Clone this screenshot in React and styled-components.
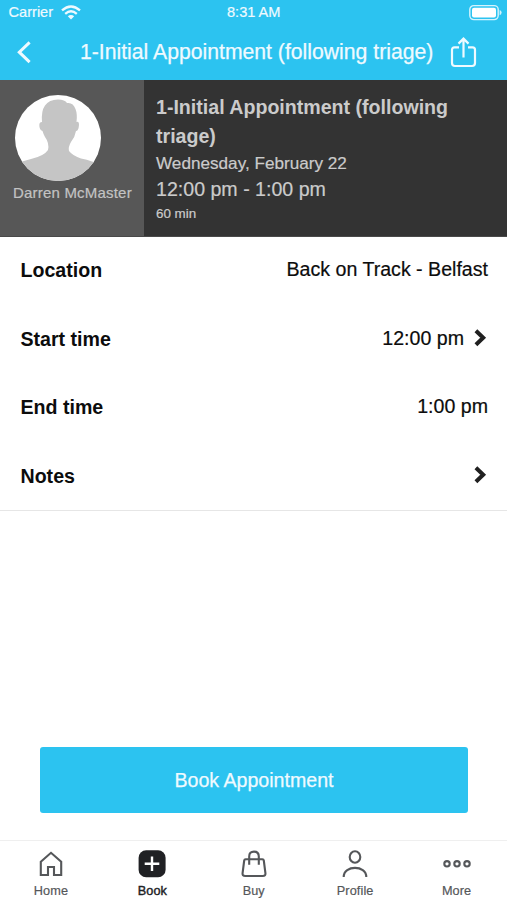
import React from 'react';
import styled, { createGlobalStyle } from 'styled-components';

const GlobalStyle = createGlobalStyle`
  * { box-sizing: border-box; }
  body { margin: 0; background: #fff; }
  button { font: inherit; border: 0; padding: 0; background: none; }
`;

const sky = '#2cc3f0';

const Screen = styled.div`
  display: flex;
  flex-direction: column;
  width: 507px;
  height: 900px;
  overflow: hidden;
  background: #fff;
  color: #0c0c0c;
  font-family: 'Liberation Sans', Arial, sans-serif;
  white-space: nowrap;
`;

const StatusBar = styled.div`
  display: grid;
  grid-template-columns: 1fr auto 1fr;
  align-items: center;
  height: 25px;
  padding: 0 5px 0 8.5px;
  background: ${sky};
  color: #effaff;
  font-size: 14.6px;
  line-height: 25px;
`;

const Clock = styled.span`
  margin-right: 3px;
  -webkit-text-stroke: 0.2px;
`;

const Carrier = styled.div`
  display: flex;
  align-items: center;
  gap: 8px;
  -webkit-text-stroke: 0.2px;
`;

const Battery = styled.svg`
  display: block;
  justify-self: end;
`;

const NavBar = styled.header`
  display: flex;
  align-items: center;
  height: 55px;
  padding: 0 30px 0 16px;
  background: ${sky};
  color: #effaff;
`;

const NavButton = styled.button`
  display: flex;
  color: inherit;
`;

const Title = styled.h1`
  flex: 1;
  margin: 0;
  padding: 0 0 1px 49px;
  font-size: 21.2px;
  font-weight: 400;
  line-height: 26px;
  -webkit-text-stroke: 0.25px;
`;

const Summary = styled.section`
  display: flex;
  height: 157px;
  border-bottom: 1px solid #494949;
  color: #cbcbcb;
`;

const Staff = styled.div`
  width: 144px;
  padding: 15px 0 0 13px;
  background: #575757;
  color: #c3c3c3;
  font-size: 15px;
  line-height: 18px;
  letter-spacing: 0.2px;
  -webkit-text-stroke: 0.2px;
`;

const Avatar = styled.svg`
  display: block;
  margin: 0 0 3px 2px;
`;

const Details = styled.div`
  flex: 1;
  padding: 13px 0 0 12px;
  background: #333;
`;

const Service = styled.h2`
  width: 310px;
  margin: 0;
  font-size: 19.6px;
  line-height: 29px;
  white-space: normal;
`;

const DetailLine = styled.div`
  font-size: ${(p) => p.$size}px;
  line-height: ${(p) => p.$line}px;
  -webkit-text-stroke: 0.2px;
`;

const Fields = styled.section`
  height: 274px;
  border-bottom: 1px solid #e6e6e6;
`;

const Field = styled.div`
  display: flex;
  align-items: center;
  justify-content: space-between;
  height: 68.4px;
  padding: 0 19px 1.6px 20.5px;
  font-size: 19.6px;
  line-height: 24px;
`;

const Label = styled.span`
  font-weight: 700;
`;

const Value = styled.span`
  display: flex;
  align-items: center;
  gap: 10px;
  padding-bottom: 2px;
  -webkit-text-stroke: 0.2px;
`;

const BookButton = styled.button`
  height: 66px;
  margin: 236px 39px 0 40px;
  border-radius: 3px;
  background: ${sky};
  color: #effaff;
  font-size: 19.6px;
  -webkit-text-stroke: 0.25px;
`;

const TabBar = styled.nav`
  display: grid;
  grid-template-columns: repeat(5, 1fr);
  height: 60px;
  margin-top: auto;
  border-top: 1px solid #efefef;
`;

const Tab = styled.div`
  display: flex;
  flex-direction: column;
  align-items: center;
  padding: 8px 0 0 0.5px;
  color: ${(p) => (p.$active ? '#202124' : '#55575a')};
  -webkit-text-stroke: ${(p) => (p.$active ? '0.4px' : '0.2px')};
  font-size: 12.7px;
  line-height: 16px;
  letter-spacing: 0.1px;

  svg {
    display: block;
    margin-bottom: 4px;
  }
`;

const TabIcon = ({ children }) => (
  <svg width="30" height="30" viewBox="0 0 30 30" fill="none" stroke="currentColor" strokeWidth="2.1">
    {children}
  </svg>
);

const Chevron = () => (
  <svg width="14" height="18" viewBox="0 0 14 18" fill="none" stroke="#202020" strokeWidth="4">
    <path d="M1.9 1.8 L9.2 8.8 L1.9 15.8" />
  </svg>
);

const tabs = [
  { label: 'Home', icon: <path d="M4.8 12.8 L15 3.8 L25.2 12.8 V26 H18 V18 H12 V26 H4.8 Z" /> },
  {
    label: 'Book',
    active: true,
    icon: (
      <>
        <rect x="1.6" y="1.2" width="27" height="27" rx="7.5" fill="currentColor" stroke="none" />
        <path d="M15 7.5 V22.1 M7.7 14.8 H22.3" stroke="#fff" strokeWidth="2.4" />
      </>
    ),
  },
  {
    label: 'Buy',
    icon: (
      <>
        <path d="M6.6 10.3 H23.4 Q24.6 10.3 24.8 11.5 L26.4 24 Q26.8 27 23.8 27 H6.2 Q3.2 27 3.6 24 L5.2 11.5 Q5.4 10.3 6.6 10.3 Z" />
        <path d="M10.2 15.8 V7.5 Q10.2 2.6 15 2.6 Q19.8 2.6 19.8 7.5 V15.8" />
      </>
    ),
  },
  {
    label: 'Profile',
    icon: (
      <>
        <ellipse cx="15" cy="8" rx="5.3" ry="5.7" />
        <path d="M3.7 28 C3.7 15.8 26.3 15.8 26.3 28" />
      </>
    ),
  },
  {
    label: 'More',
    icon: (
      <>
        <circle cx="5" cy="14.8" r="2.7" />
        <circle cx="15" cy="14.8" r="2.7" />
        <circle cx="25" cy="14.8" r="2.7" />
      </>
    ),
  },
];

export default function App() {
  return (
    <Screen>
      <GlobalStyle />
      <StatusBar>
        <Carrier>
          Carrier
          <svg width="20" height="15" viewBox="0 0 20 15" fill="none" stroke="currentColor" strokeWidth="2.3">
            <path d="M1 5.4 Q10 -2.4 19 5.4" />
            <path d="M4.2 8.8 Q10 3.8 15.8 8.8" />
            <path d="M10 14.5 L6.8 11.3 Q10 8.6 13.2 11.3 Z" fill="currentColor" stroke="none" />
          </svg>
        </Carrier>
        <Clock>8:31 AM</Clock>
        <Battery width="33" height="17" viewBox="0 0 33 17">
          <rect x="0.8" y="1.6" width="28.4" height="14" rx="4" fill="none" stroke="#d5f3fd" strokeWidth="1.4" />
          <rect x="3" y="3.8" width="24" height="9.6" rx="2" fill="#fff" />
          <path d="M30.6 6 Q32.6 6.7 32.6 8.6 Q32.6 10.6 30.6 11.3 Z" fill="#d5f3fd" />
        </Battery>
      </StatusBar>
      <NavBar>
        <NavButton aria-label="Back">
          <svg width="15" height="24" viewBox="0 0 15 24" fill="none" stroke="currentColor" strokeWidth="3">
            <path d="M13.6 1.4 L3.3 11.2 L13.6 21.2" />
          </svg>
        </NavButton>
        <Title>1-Initial Appointment (following triage)</Title>
        <NavButton aria-label="Share">
          <svg width="27" height="32" viewBox="0 0 27 32" fill="none" stroke="currentColor" strokeWidth="2.2">
            <path d="M9 10.3 H4.5 Q2 10.3 2 12.8 V26 Q2 29 5 29 H22 Q25 29 25 26 V12.8 Q25 10.3 22.5 10.3 H18" />
            <path d="M13.5 20.5 V2.2 M8.5 6.6 L13.5 1.6 L18.5 6.6" />
          </svg>
        </NavButton>
      </NavBar>
      <Summary>
        <Staff>
          <Avatar width="86" height="86" viewBox="0 0 86 86">
            <clipPath id="face">
              <circle cx="43" cy="43" r="43" />
            </clipPath>
            <circle cx="43" cy="43" r="43" fill="#fff" />
            <path
              clipPath="url(#face)"
              fill="#c5c5c5"
              d="M0 69 Q8 66 16 64 Q29 61 33 55 Q34.5 48 30 42 Q28 38 27.5 36 Q24.3 35 24.3 30 Q24.3 27 27 27 Q26 16 30 10.5 Q34 4.5 43 4.5 Q50 4.5 52 8 Q58 7 60.5 14 Q62.5 19 61.5 27 Q64 26 64 30 Q63.5 36 61 36 Q60 42 56 47 Q53 52 54 56 Q58 61 66 63.5 Q78 66 86 70 V86 H0 Z"
            />
          </Avatar>
          Darren McMaster
        </Staff>
        <Details>
          <Service>1-Initial Appointment (following triage)</Service>
          <DetailLine $size={17.15} $line={25}>Wednesday, February 22</DetailLine>
          <DetailLine $size={19.6} $line={26}>12:00 pm - 1:00 pm</DetailLine>
          <DetailLine $size={13.4} $line={23}>60 min</DetailLine>
        </Details>
      </Summary>
      <Fields>
        <Field>
          <Label>Location</Label>
          <Value>Back on Track - Belfast</Value>
        </Field>
        <Field>
          <Label>Start time</Label>
          <Value>12:00 pm<Chevron /></Value>
        </Field>
        <Field>
          <Label>End time</Label>
          <Value>1:00 pm</Value>
        </Field>
        <Field>
          <Label>Notes</Label>
          <Value><Chevron /></Value>
        </Field>
      </Fields>
      <BookButton>Book Appointment</BookButton>
      <TabBar>
        {tabs.map((t) => (
          <Tab key={t.label} $active={t.active}>
            <TabIcon>{t.icon}</TabIcon>
            {t.label}
          </Tab>
        ))}
      </TabBar>
    </Screen>
  );
}
